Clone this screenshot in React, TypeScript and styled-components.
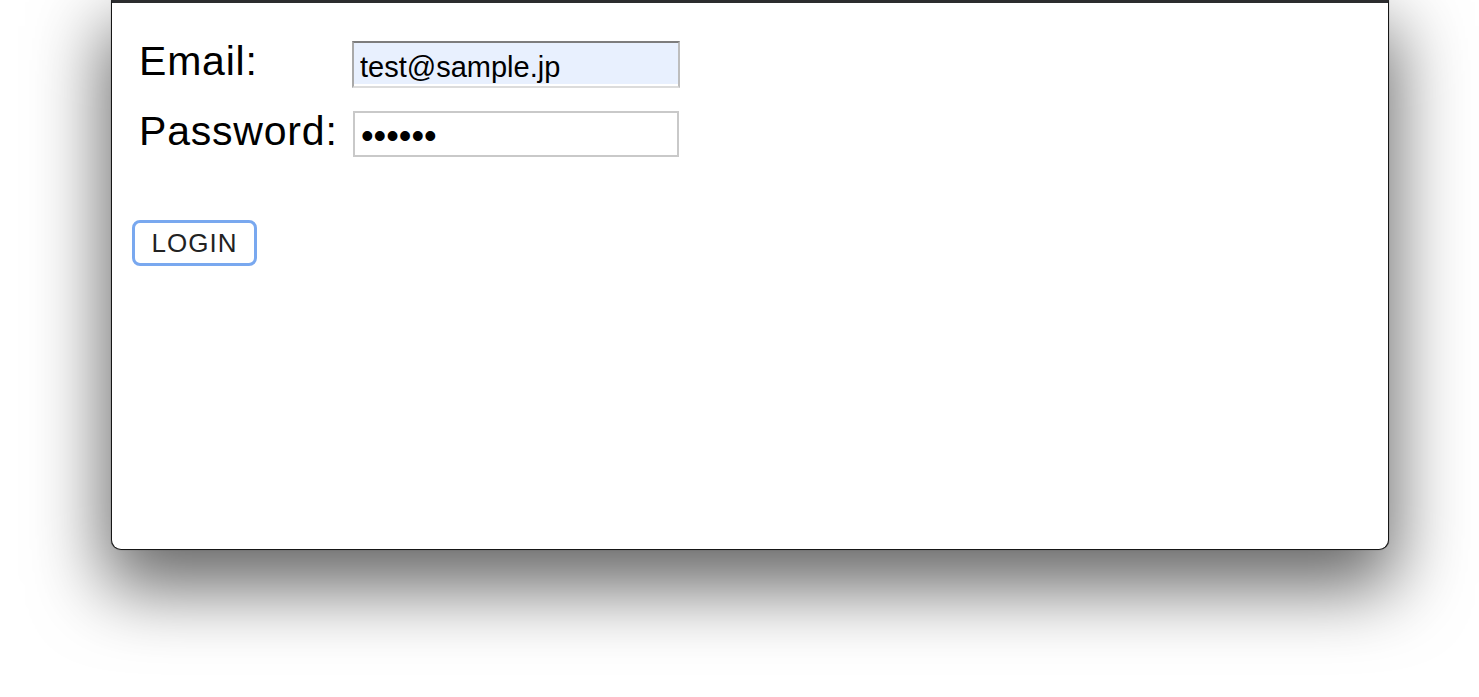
import React from "react";
import styled, { createGlobalStyle, css } from "styled-components";

const GlobalStyle = createGlobalStyle`
  html, body {
    margin: 0;
    padding: 0;
    background: #ffffff;
    font-family: "Liberation Sans", Arial, Helvetica, sans-serif;
  }
  * { box-sizing: border-box; }
`;

const Desk = styled.div`
  width: 1479px;
  height: 697px;
  padding-left: 111px;
  overflow: hidden;
  display: flex;
  align-items: flex-start;
  background: #ffffff;
`;

const Window = styled.div`
  width: 1278px;
  height: 550px;
  background: #ffffff;
  border: 1px solid #161616;
  border-top: 3px solid #2c2d2f;
  border-radius: 0 0 10px 10px;
  box-shadow: 0 32px 72px 6px rgba(0, 0, 0, 0.6), 0 0 1px rgba(0, 0, 0, 0.6);
  padding: 38px 0 0 20px;
  display: flex;
  flex-direction: column;
  align-items: flex-start;
`;

const Form = styled.form`
  display: flex;
  flex-direction: column;
  align-items: flex-start;
  margin: 0;
`;

const Fields = styled.div`
  display: grid;
  grid-template-columns: 213px 328px;
  row-gap: 23px;
  margin-left: 7px;
  align-items: start;
`;

const Label = styled.label`
  font-size: 41px;
  line-height: 41px;
  color: #000;
  letter-spacing: 0.8px;
  white-space: nowrap;
`;

const Input = styled.input<{ $autofill?: boolean }>`
  font-family: "Liberation Sans", Arial, sans-serif;
  font-size: 29px;
  color: #000;
  margin: 0;
  outline: none;
  ${(p) =>
    p.$autofill
      ? css`
          width: 328px;
          height: 47px;
          padding: 5px 6px 0;
          background: #e8f0fe;
          border-style: solid;
          border-width: 2px;
          border-color: #7d7d7d #bdbdbd #dcdcdc #a9a9a9;
          box-shadow: inset 0 -2px 0 #ffffff;
        `
      : css`
          width: 326px;
          height: 46px;
          margin-left: 1px;
          padding: 3px 6px 0;
          background: #ffffff;
          border: 2px solid #c9c9c9;
          letter-spacing: 0;
          font-size: 36px;
        `}
`;

const LoginButton = styled.button`
  margin-top: 63px;
  width: 125px;
  height: 46px;
  border: 3px solid #79a8ef;
  border-radius: 8px;
  background: #ffffff;
  color: #222;
  font-family: "Liberation Sans", Arial, sans-serif;
  font-size: 26px;
  letter-spacing: 1px;
  padding: 0;
  cursor: pointer;
`;

export default function App() {
  return (
    <>
      <GlobalStyle />
      <Desk>
        <Window>
          <Form onSubmit={(e) => e.preventDefault()}>
            <Fields>
              <Label htmlFor="email">Email:</Label>
              <Input id="email" type="text" defaultValue="test@sample.jp" $autofill />
              <Label htmlFor="password">Password:</Label>
              <Input id="password" type="password" defaultValue="123456" />
            </Fields>
            <LoginButton type="submit">LOGIN</LoginButton>
          </Form>
        </Window>
      </Desk>
    </>
  );
}
